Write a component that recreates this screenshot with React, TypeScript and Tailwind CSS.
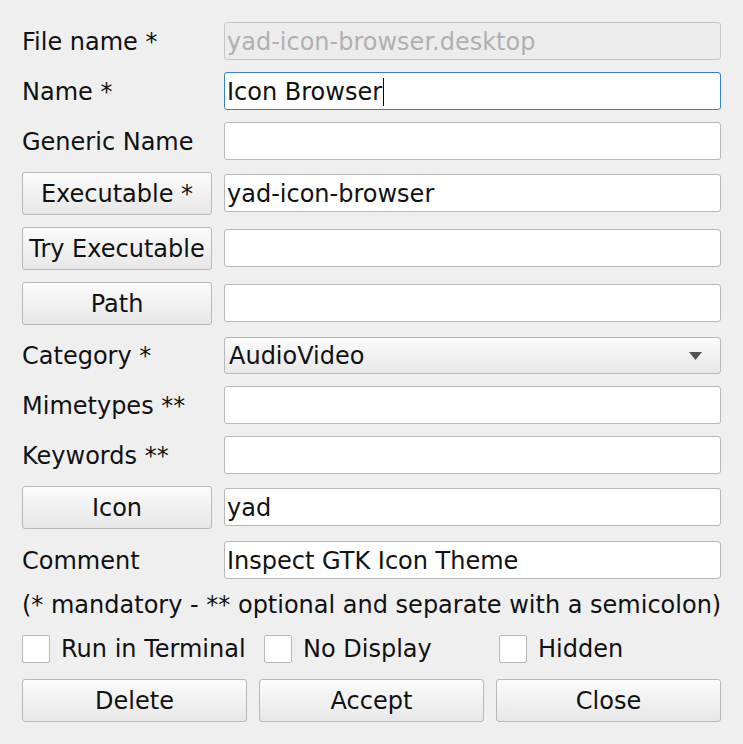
import React from "react";

function Label({ children }: { children: React.ReactNode }) {
  return <div className="w-[190px] shrink-0 whitespace-nowrap pt-[1px]">{children}</div>;
}

function Btn({ children, className = "" }: { children: React.ReactNode; className?: string }) {
  return (
    <div
      className={`h-[43px] flex items-center justify-center whitespace-nowrap overflow-hidden rounded-[3px] border border-[#b8b8b8] bg-linear-to-b from-[#fbfbfb] to-[#e7e7e7] ${className}`}
    >
      {children}
    </div>
  );
}

function Field({ value = "", focused = false, disabled = false }: { value?: string; focused?: boolean; disabled?: boolean }) {
  const border = focused ? "border-[#3a7fc2]" : disabled ? "border-[#c6c6c6]" : "border-[#b8b8b8]";
  const bg = disabled ? "bg-[#ececec] text-[#b0b0b0]" : "bg-white";
  return (
    <div className={`h-[38px] flex-1 flex items-center pl-[2px] pt-[1px] rounded-[3px] border ${border} ${bg}`}>
      <span className="whitespace-nowrap">{value}</span>
      {focused && <span className="inline-block w-px h-[28px] bg-black ml-[1px]" />}
    </div>
  );
}

function Row({ label, value, focused, disabled }: { label: string; value?: string; focused?: boolean; disabled?: boolean }) {
  return (
    <div className="flex items-center gap-[12px]">
      <Label>{label}</Label>
      <Field value={value} focused={focused} disabled={disabled} />
    </div>
  );
}

function BtnRow({ label, value }: { label: string; value?: string }) {
  return (
    <div className="flex items-start gap-[12px]">
      <Btn className="w-[190px] shrink-0">{label}</Btn>
      <div className="flex-1 flex mt-[2px]">
        <Field value={value} />
      </div>
    </div>
  );
}

function Check({ label, className = "" }: { label: string; className?: string }) {
  return (
    <div className={`flex items-center ${className}`}>
      <div className="w-[28px] h-[28px] shrink-0 bg-white border border-[#b8b8b8] rounded-[2px]" />
      <span className="ml-[11px] whitespace-nowrap">{label}</span>
    </div>
  );
}

export default function App() {
  return (
    <div className="w-[743px] h-[744px] bg-[#efefef] text-[#111] font-['DejaVu_Sans',sans-serif] text-[24px] leading-[28px] px-[22px] pt-[22px] flex flex-col gap-[12px] overflow-hidden">
      <Row label="File name *" value="yad-icon-browser.desktop" disabled />
      <Row label="Name *" value="Icon Browser" focused />
      <Row label="Generic Name" />
      <BtnRow label="Executable *" value="yad-icon-browser" />
      <BtnRow label="Try Executable" />
      <BtnRow label="Path" />

      <div className="flex items-center gap-[12px]">
        <Label>Category *</Label>
        <div className="h-[37px] flex-1 flex items-center justify-between pl-[4px] pr-[18px] rounded-[3px] border border-[#b8b8b8] bg-linear-to-b from-[#fbfbfb] to-[#e8e8e8]">
          <span>AudioVideo</span>
          <svg width="13" height="8" viewBox="0 0 13 8">
            <polygon points="0,0 13,0 6.5,8" fill="#555" />
          </svg>
        </div>
      </div>

      <Row label="Mimetypes **" />
      <Row label="Keywords **" />
      <BtnRow label="Icon" value="yad" />
      <Row label="Comment" value="Inspect GTK Icon Theme" />

      <div className="whitespace-nowrap">(* mandatory - ** optional and separate with a semicolon)</div>

      <div className="flex items-center mt-[4px]">
        <Check label="Run in Terminal" className="w-[242px]" />
        <Check label="No Display" className="w-[235px]" />
        <Check label="Hidden" />
      </div>

      <div className="grid grid-cols-3 gap-[12px] mt-[4px]">
        <Btn>Delete</Btn>
        <Btn>Accept</Btn>
        <Btn>Close</Btn>
      </div>
    </div>
  );
}
